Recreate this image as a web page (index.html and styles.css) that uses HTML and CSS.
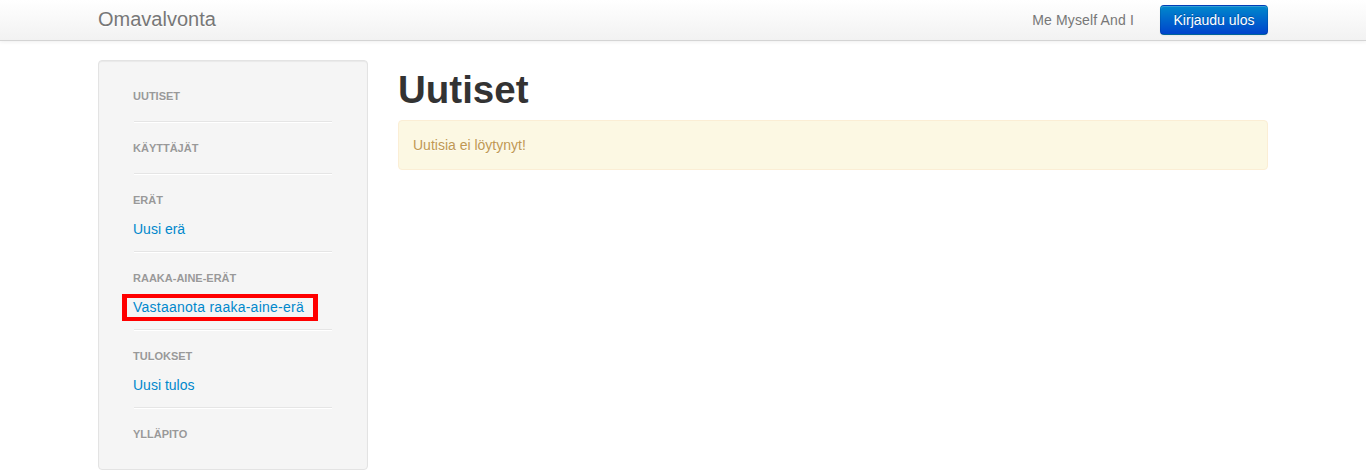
FILE: index.html
```html
<!DOCTYPE html>
<html lang="fi">
<head>
<meta charset="utf-8">
<title>Omavalvonta</title>
<link rel="stylesheet" href="styles.css">
</head>
<body>
<header class="navbar">
  <div class="container navbar-inner">
    <a class="brand" href="#">Omavalvonta</a>
    <div class="navbar-right">
      <span class="navbar-text">Me Myself And I</span>
      <button class="btn btn-primary" type="button">Kirjaudu ulos</button>
    </div>
  </div>
</header>
<div class="container main">
  <aside class="well sidebar">
    <ul class="nav-list">
      <li class="nav-header">Uutiset</li>
      <li class="divider"></li>
      <li class="nav-header">Käyttäjät</li>
      <li class="divider"></li>
      <li class="nav-header">Erät</li>
      <li class="nav-item"><a href="#">Uusi erä</a></li>
      <li class="divider"></li>
      <li class="nav-header">Raaka-aine-erät</li>
      <li class="nav-item"><a href="#"><span class="highlight">Vastaanota raaka-aine-erä</span></a></li>
      <li class="divider"></li>
      <li class="nav-header">Tulokset</li>
      <li class="nav-item"><a href="#">Uusi tulos</a></li>
      <li class="divider"></li>
      <li class="nav-header">Ylläpito</li>
    </ul>
  </aside>
  <main class="content">
    <h1 class="page-title">Uutiset</h1>
    <div class="alert">Uutisia ei löytynyt!</div>
  </main>
</div>
</body>
</html>
```

FILE: styles.css
```css
* {
  box-sizing: border-box;
}

body {
  margin: 0;
  font-family: "Liberation Sans", Arial, Helvetica, sans-serif;
  font-size: 14px;
  line-height: 20px;
  color: #333333;
  background: #ffffff;
}

a {
  color: #0088cc;
  text-decoration: none;
}

.container {
  width: 1170px;
  margin: 0 auto;
}

/* Navbar */
.navbar {
  height: 41px;
  background: linear-gradient(to bottom, #ffffff, #f2f2f2);
  border-bottom: 1px solid #d4d4d4;
  box-shadow: 0 1px 4px rgba(0, 0, 0, 0.065);
}

.navbar-inner {
  display: flex;
  align-items: flex-start;
  height: 40px;
}

.brand {
  display: block;
  padding: 9px 0 11px;
  font-size: 20px;
  line-height: 20px;
  color: #777777;
  text-shadow: 0 1px 0 #ffffff;
}

.navbar-right {
  margin-left: auto;
  display: flex;
  align-items: center;
  height: 40px;
  gap: 26px;
}

.navbar-text {
  line-height: 40px;
  color: #777777;
  letter-spacing: 0.15px;
}

.btn {
  font-family: inherit;
  font-size: 14px;
  line-height: 20px;
  padding: 4px 12px;
  border-radius: 4px;
  cursor: pointer;
}

.btn-primary {
  color: #ffffff;
  text-shadow: 0 -1px 0 rgba(0, 0, 0, 0.25);
  background: linear-gradient(to bottom, #0088cc, #0044cc);
  border: 1px solid #0044cc;
  border-color: rgba(0, 0, 0, 0.1) rgba(0, 0, 0, 0.1) rgba(0, 0, 0, 0.25);
  box-shadow: inset 0 1px 0 rgba(255, 255, 255, 0.2), 0 1px 2px rgba(0, 0, 0, 0.05);
  width: 108px;
  height: 30px;
}

/* Main layout */
.main {
  display: flex;
  gap: 30px;
  padding-top: 19px;
  align-items: flex-start;
}

.well {
  background: #f5f5f5;
  border: 1px solid #e3e3e3;
  border-radius: 4px;
  box-shadow: inset 0 1px 1px rgba(0, 0, 0, 0.05);
}

.sidebar {
  width: 270px;
  flex: 0 0 270px;
  padding: 22px 19px 22px;
}

.nav-list {
  list-style: none;
  margin: 0;
  padding: 0 15px;
}

.nav-header {
  display: block;
  padding: 3px 0;
  font-size: 11px;
  font-weight: bold;
  line-height: 20px;
  color: #999999;
  text-shadow: 0 1px 0 rgba(255, 255, 255, 0.5);
  text-transform: uppercase;
}

.nav-item a {
  display: block;
  padding: 6px 0 0;
  line-height: 20px;
}

.divider {
  height: 2px;
  margin: 12px 1px;
  background: #e5e5e5;
  border-bottom: 1px solid #ffffff;
}

.highlight {
  position: relative;
  letter-spacing: 0.25px;
}

.highlight::after {
  content: "";
  position: absolute;
  top: -5px;
  bottom: -6px;
  left: -11px;
  right: -14px;
  border: 4px solid #ff0000;
  border-left-width: 5px;
  border-right-width: 5px;
}

/* Content */
.content {
  flex: 1 1 auto;
  min-width: 0;
}

.page-title {
  margin: 10px 0;
  font-size: 38.5px;
  line-height: 40px;
  font-weight: bold;
  color: #333333;
}

.alert {
  padding: 14px 35px 14px 14px;
  color: #c09853;
  background: #fcf8e3;
  border: 1px solid #fbeed5;
  border-radius: 4px;
  text-shadow: 0 1px 0 rgba(255, 255, 255, 0.5);
}
```
